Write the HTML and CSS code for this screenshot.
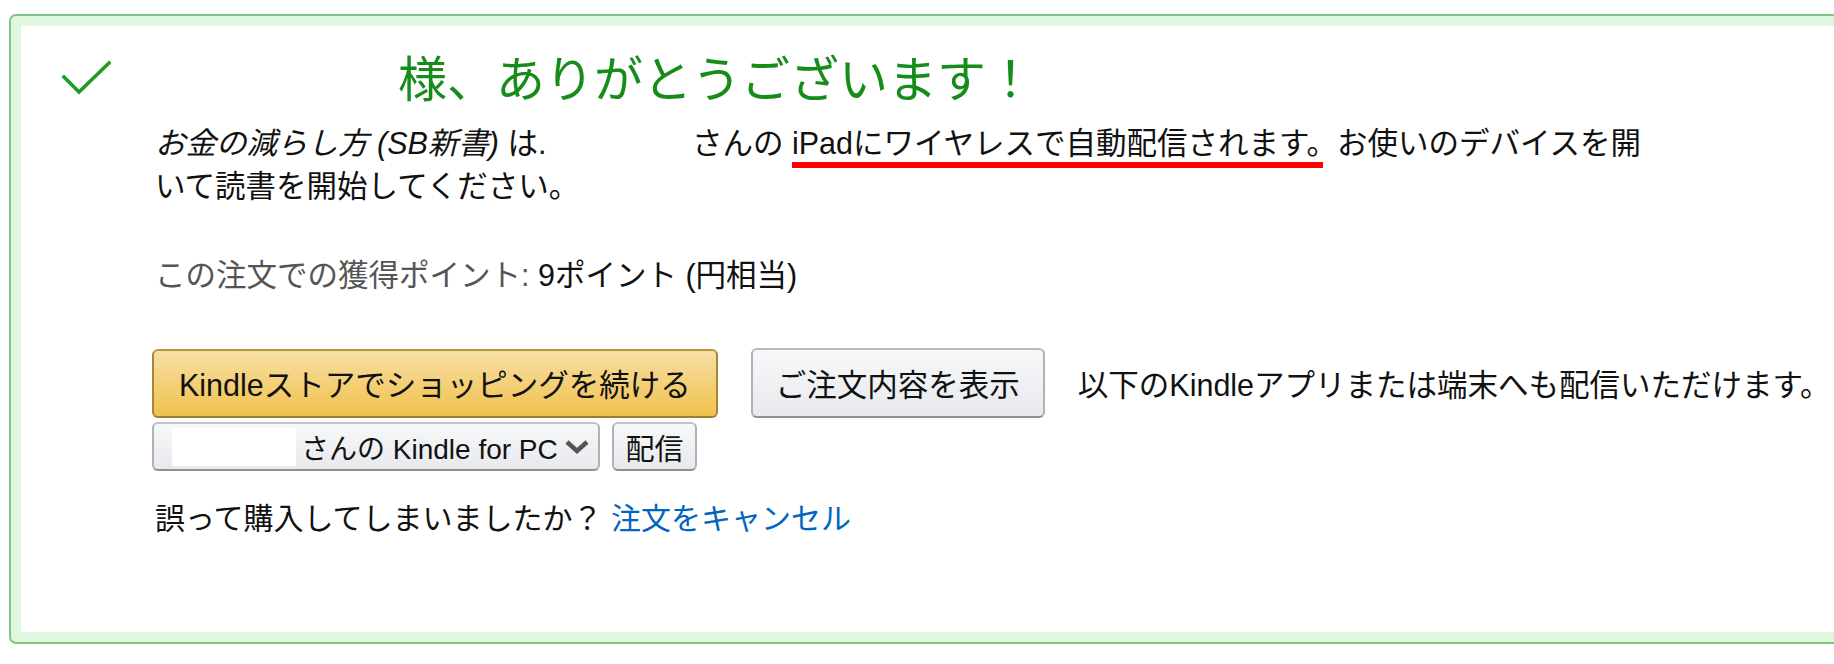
FILE: index.html
```html
<!DOCTYPE html>
<html lang="ja">
<head>
<meta charset="utf-8">
<title>ご注文ありがとうございます</title>
<link rel="stylesheet" href="styles.css">
</head>
<body>
<div class="page">
  <div class="alert">
    <div class="alert-inner">
      <svg class="check" viewBox="0 0 50 36" aria-hidden="true">
        <polyline points="3,17 18,32 48,3" fill="none" stroke="#1f9a27" stroke-width="3.6" stroke-linecap="square"/>
      </svg>
      <div class="content">
        <h1 class="heading"><span class="redact redact-heading"></span>様、ありがとうございます！</h1>
        <p class="message"><i>お金の減らし方 (SB新書)</i> は. <span class="redact redact-inline"></span>さんの <span class="marked">iPadにワイヤレスで自動配信されます。</span>お使いのデバイスを開いて読書を開始してください。</p>
        <p class="points"><span class="label">この注文での獲得ポイント:</span> 9ポイント (円相当)</p>
        <div class="actions">
          <a class="btn btn-primary">Kindleストアでショッピングを続ける</a>
          <a class="btn btn-secondary">ご注文内容を表示</a>
          <span class="also">以下のKindleアプリまたは端末へも配信いただけます。</span>
        </div>
        <div class="deliver">
          <div class="select"><span class="redact redact-select"></span><span class="select-text">さんの Kindle for PC</span><svg class="chevron" viewBox="0 0 26 16" aria-hidden="true"><polyline points="3,3 13,12 23,3" fill="none" stroke="#555" stroke-width="4.5"/></svg></div>
          <a class="btn btn-small">配信</a>
        </div>
        <p class="cancel">誤って購入してしまいましたか？ <a class="link">注文をキャンセル</a></p>
      </div>
    </div>
  </div>
</div>
</body>
</html>
```
FILE: styles.css
```css
html, body {
  margin: 0;
  background: #fff;
  overflow: hidden;
}
body {
  font-family: "Liberation Sans", "Noto Sans CJK JP", sans-serif;
  color: #111;
}
.page {
  width: 1900px;
  padding: 14px 0 0 9px;
}
.alert {
  border: 2px solid #7fc583;
  border-radius: 7px;
  background: #dff7df;
  padding: 10px;
}
.alert-inner {
  background: #fff;
  display: flex;
  align-items: flex-start;
  padding: 25px 0 92px 40px;
}
.check {
  flex: none;
  width: 50px;
  height: 36px;
  margin-top: 9px;
}
.content {
  margin-left: 44px;
}
.redact {
  display: inline-block;
  background: #fff;
}
.heading {
  margin: 0;
  font-size: 49px;
  line-height: 58px;
  font-weight: normal;
  color: #168c1a;
}
.redact-heading {
  width: 243px;
  height: 1px;
}
.message {
  margin: 13px 0 0;
  max-width: 1496px;
  font-size: 30.5px;
  line-height: 43px;
}
.redact-inline {
  width: 137px;
  height: 1px;
}
.marked {
  position: relative;
}
.marked::after {
  content: "";
  position: absolute;
  left: 0;
  right: 14px;
  bottom: -8px;
  height: 6px;
  background: #ff0000;
}
.points {
  margin: 46px 0 0;
  font-size: 30.5px;
  line-height: 43px;
}
.points .label {
  color: #555;
}
.actions {
  margin: 51px 0 0 -3px;
  display: flex;
  align-items: center;
  gap: 33px;
  white-space: nowrap;
}
.btn {
  box-sizing: border-box;
  display: inline-flex;
  align-items: center;
  justify-content: center;
  border: 2px solid;
  border-radius: 6px;
  font-size: 30.5px;
  color: #111;
  text-decoration: none;
  white-space: nowrap;
}
.btn-primary {
  height: 69px;
  padding: 0 25px;
  background: linear-gradient(to bottom, #f7dfa5, #f0c14b);
  border-color: #b8983f #a88734 #9c7e31;
}
.btn-secondary {
  height: 70px;
  padding: 0 23px;
  background: linear-gradient(to bottom, #f7f8fa, #e7e9ec);
  border-color: #b8bbc1 #adb1b8 #8d9096;
}
.also {
  font-size: 30.5px;
}
.deliver {
  margin: 4px 0 0 -3px;
  display: flex;
  gap: 12px;
}
.select {
  box-sizing: border-box;
  width: 448px;
  height: 49px;
  display: flex;
  align-items: center;
  padding-left: 18px;
  border: 2px solid;
  border-color: #c0c3c8 #adb1b8 #8d9096;
  border-radius: 6px;
  background: linear-gradient(to bottom, #f7f8fa, #e7e9ec);
  font-size: 28px;
  white-space: nowrap;
}
.redact-select {
  flex: none;
  width: 124px;
  height: 38px;
  margin-right: 5px;
}
.select-text {
  flex: none;
}
.chevron {
  flex: none;
  width: 26px;
  height: 16px;
  margin-left: 6px;
}
.btn-small {
  height: 49px;
  width: 85px;
  padding: 0;
  background: linear-gradient(to bottom, #f7f8fa, #e7e9ec);
  border-color: #c0c3c8 #adb1b8 #8d9096;
  font-size: 29px;
}
.cancel {
  margin: 26px 0 0;
  font-size: 30px;
  line-height: 43px;
}
.link {
  color: #0066c0;
  text-decoration: none;
}
```
